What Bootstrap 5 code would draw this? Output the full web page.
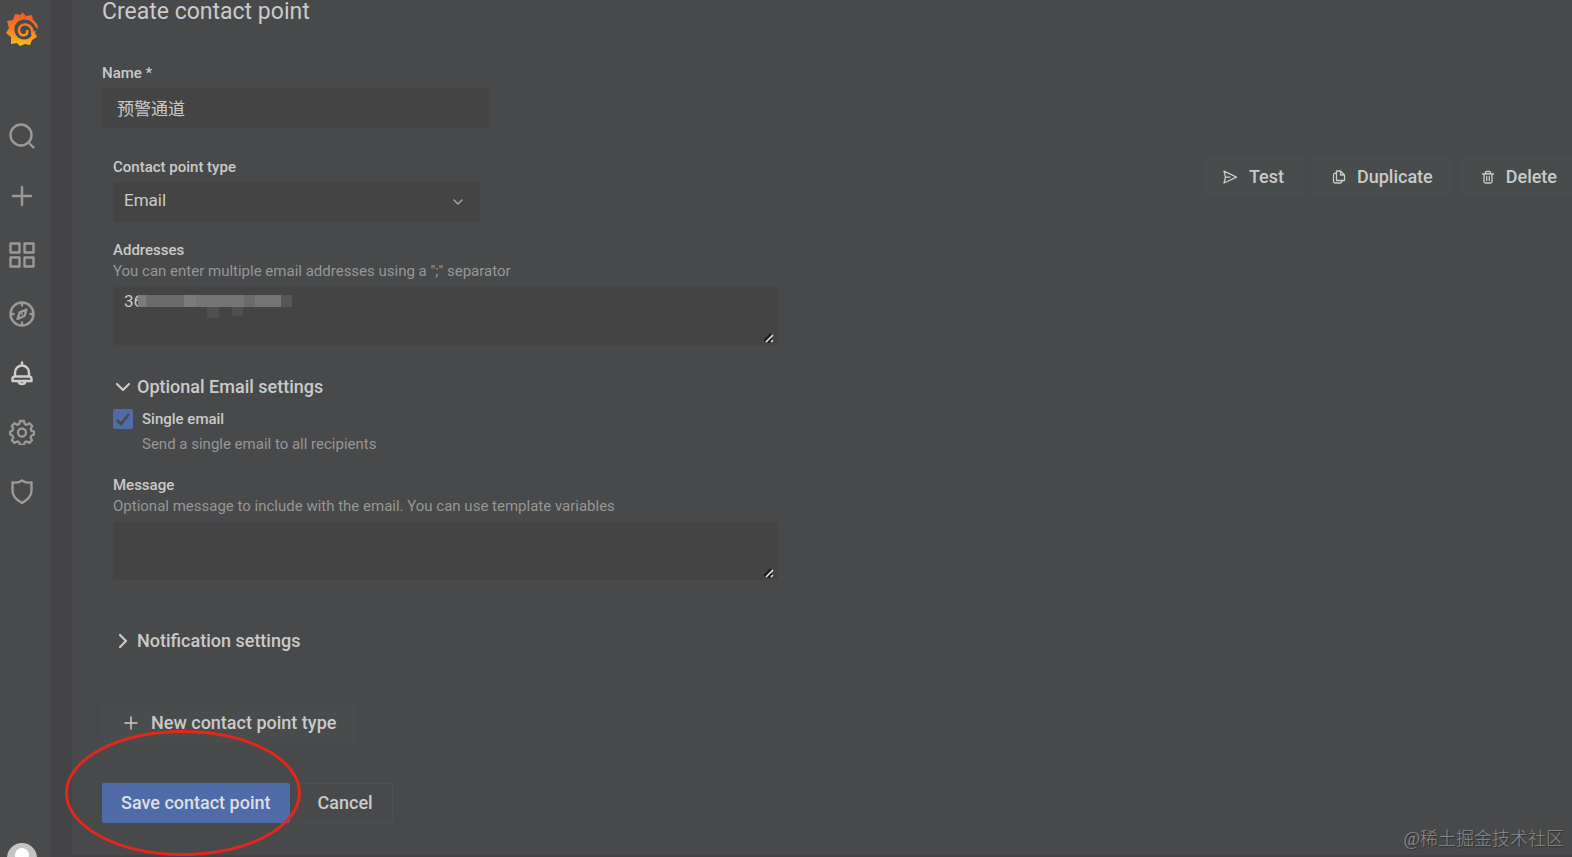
<!DOCTYPE html>
<html lang="en">
<head>
<meta charset="utf-8">
<meta name="viewport" content="width=device-width, initial-scale=1">
<title>Create contact point</title>
<link href="https://cdn.jsdelivr.net/npm/bootstrap@5.3.0/dist/css/bootstrap.min.css" rel="stylesheet">
<script src="https://cdn.jsdelivr.net/npm/bootstrap@5.3.0/dist/js/bootstrap.bundle.min.js"></script>
<style>
:root{--panel:#48494b;--gutter:#444446;--field:#444445;--text:#cbcac8;--muted:#979795;--blue:#4f6ba8}
body{font-family:Roboto,"Noto Sans CJK SC",sans-serif;background:var(--gutter);color:var(--text);font-size:17px;line-height:20px}
.side{width:51px;background:#494a4b}
.side a{width:44px;height:59px;color:#9a9a99}
.side a.brand{height:57px;margin-bottom:50px}
.side a.current{color:#cfcecb}
.side a.avatar{height:30px;margin-bottom:-16px}
.page-body{background:var(--panel);margin-left:21px;padding-left:30px;border-bottom:2px solid #434345}
h1{font-size:23px;line-height:24px;font-weight:400;margin-bottom:39px}
.lbl{font-size:15px;font-weight:500;line-height:20px;display:block}
.hint{font-size:15px;line-height:22px;color:var(--muted)}
.field,.field:focus{background-color:var(--field);color:var(--text);border:0;border-radius:2px;box-shadow:none;font-size:17px;line-height:20px}
.name-field{max-width:387px;height:40px;padding:9px 15px 11px;margin:5px 0 29px}
.inner{margin-left:11px}
.type-field{width:367px;height:40px;padding:8px 11px 12px;margin:5px 0 18px;
--bs-form-select-bg-img:url("data:image/svg+xml,%3Csvg xmlns='http://www.w3.org/2000/svg' viewBox='0 0 12 12'%3E%3Cpath d='M2 4l4 4 4-4' fill='none' stroke='%23aaa' stroke-width='1.4' stroke-linecap='round' stroke-linejoin='round'/%3E%3C/svg%3E");background-size:12px;background-position:right 16px top 14px}
.area-wrap{width:665px;max-width:100%;margin-top:5px}
.area-wrap textarea{height:58px;min-height:0;padding:4px 11px;resize:none;display:block}
.grip{right:4px;bottom:2px}
.mosaic{left:25px;top:7px}
.toggle{border:0;background:none;color:var(--text);font-size:18px;font-weight:500;padding:0;height:24px;gap:5px;margin-top:30px}
.toggle.closed{margin-top:49px}
.tick{width:20px;height:20px;margin:0;border:0;flex:none}
.tick[type=checkbox]{border-radius:2px}
.tick:checked{background-color:var(--blue);--bs-form-check-bg-image:url("data:image/svg+xml,%3Csvg xmlns='http://www.w3.org/2000/svg' viewBox='0 0 20 20'%3E%3Cpath d='M4 11l4 4 8-10' fill='none' stroke='%2348494b' stroke-width='2.6'/%3E%3C/svg%3E");background-image:url("data:image/svg+xml,%3Csvg xmlns='http://www.w3.org/2000/svg' viewBox='0 0 20 20'%3E%3Cpath d='M4 11l4 4 8-10' fill='none' stroke='%2348494b' stroke-width='2.6'/%3E%3C/svg%3E")}
.tick-row{margin-top:10px;gap:9px}
.act{height:40px;border-radius:2px;font-size:18px;font-weight:500;line-height:20px;padding:0 19px;gap:10px;color:var(--text);border:0;white-space:nowrap}
.act.grey,.act.grey:hover{background:#484c4c;color:var(--text)}
.act.save,.act.save:hover{background:var(--blue);color:#dcdfe6}
.act.outline,.act.outline:hover{border:1px solid #4e4f50;color:var(--text)}
.act.add{margin-top:50px}
.tools{gap:9px;margin-right:-4px}
.ring{left:-38px;top:-38px;pointer-events:none}
.credit{right:8px;bottom:8px;font-family:"Liberation Serif","Noto Sans CJK SC",serif;font-weight:300;font-size:18px;color:#8b8b8c;text-shadow:1px 1px 1px #2e2e2f}
</style>
</head>
<body>
<div class="d-flex vh-100 overflow-hidden position-relative">
<nav class="side d-flex flex-column flex-shrink-0" aria-label="Main">
<a href="#" class="brand d-flex align-items-center justify-content-center" aria-label="Home">
<svg width="34" height="36" viewBox="0 0 34 36"><defs><linearGradient id="sun" gradientUnits="userSpaceOnUse" x1="0" y1="0" x2="0" y2="36"><stop offset="0" stop-color="#ee5a2c"/><stop offset=".5" stop-color="#f47a27"/><stop offset="1" stop-color="#fbc417"/></linearGradient></defs>
<path fill="url(#sun)" d="M17 1l4 4 6-1 1 5c3 2 5 5 5 9l-3-3c1 3 1 5 0 7l2 4-5 3-2 5-5-1-5 2-3-3-6 1 0-7-5-4 3-5-2-7 6-1 2-6 6 1z"/>
<path fill="#48494b" d="M32 19C29 11 24 8 18.500 8.500 12.500 9 9 14 9.500 19.500c.5 5 4.500 9 9.500 9 3.500 0 6.500-1.500 8-4.500l2.500-4z"/>
<path d="M27.500 23.500c.5-6.500-3-10-7.500-10-4 0-6.300 3-6 6.200.3 3 2.500 4.800 5 4.600 2.500-.3 3.700-2.300 3.200-4.200" fill="none" stroke="url(#sun)" stroke-width="2.600" stroke-linecap="round"/></svg></a>
<a href="#" class="d-flex align-items-center justify-content-center" aria-label="Search"><svg width="26" height="28" viewBox="0 0 26 28" fill="none" stroke="currentColor" stroke-width="2.400" stroke-linecap="round"><circle cx="12" cy="12" r="10.500"/><path d="M19.500 19.500L24.500 24.500"/></svg></a>
<a href="#" class="d-flex align-items-center justify-content-center" aria-label="Create"><svg width="26" height="26" viewBox="0 0 26 26" fill="none" stroke="currentColor" stroke-width="2.400" stroke-linecap="round"><path d="M13 4v18M4 13h18"/></svg></a>
<a href="#" class="d-flex align-items-center justify-content-center" aria-label="Dashboards"><svg width="26" height="26" viewBox="0 0 26 26" fill="none" stroke="currentColor" stroke-width="2.400" stroke-linejoin="round"><path d="M1.500 1.500h9v9h-9zM15.500 1.500h9v9h-9zM1.500 15.500h9v9h-9zM15.500 15.500h9v9h-9z"/></svg></a>
<a href="#" class="d-flex align-items-center justify-content-center" aria-label="Explore"><svg width="26" height="26" viewBox="0 0 26 26" fill="none" stroke="currentColor" stroke-width="2.400" stroke-linejoin="round" stroke-linecap="round"><circle cx="13" cy="13" r="11.500"/><path d="M17.500 8.500l-2 6.500-7 3 2.200-6.700zM13 2v2.500M13 21.500V24M2 13h2.500M21.500 13H24"/><path d="M13 12.500v1" stroke-width="1.500"/></svg></a>
<a href="#" class="current d-flex align-items-center justify-content-center" aria-label="Alerting"><svg width="26" height="26" viewBox="0 0 26 26" fill="none" stroke="currentColor" stroke-width="2.400" stroke-linejoin="round" stroke-linecap="round"><path d="M13 2.500v3M6 16.500V12.500a7 7 0 0 1 14 0v4M6 16.500h14c1.500 0 2.500 1 2.500 2.500v2h-19v-2c0-1.500 1-2.500 2.500-2.500zM9.500 21.500c.8 3.500 6.200 3.500 7 0"/></svg></a>
<a href="#" class="d-flex align-items-center justify-content-center" aria-label="Configuration"><svg width="26" height="26" viewBox="0 0 26 26" fill="none" stroke="currentColor" stroke-width="2.300" stroke-linejoin="round"><circle cx="13" cy="13.500" r="4"/><path d="M11 2h4l.7 3 2 .9 2.800-1.700 2.800 2.800-1.700 2.800.9 2 2.500.7v3l-2.500 1-.9 2 1.500 2.700-2.700 2.700-2.700-1.500-2 .9-.7 2.500h-4l-.8-2.500-2-.9-2.700 1.500-2.700-2.700L4.300 18.500l-.9-2-2.200-1v-3l2.200-.9.9-2-1.500-2.600 2.700-2.800 2.700 1.700 2-.9z"/></svg></a>
<a href="#" class="d-flex align-items-center justify-content-center" aria-label="Server admin"><svg width="26" height="26" viewBox="0 0 26 26" fill="none" stroke="currentColor" stroke-width="2.400" stroke-linejoin="round"><path d="M13 2.500c2.800 2 6 2.600 9.500 1.800V12.500c0 5.500-4 9.500-9.500 12.500C7.500 22 3.500 18 3.500 12.500V4.300C7 5.100 10.200 4.500 13 2.500z"/></svg></a>
<a href="#" class="avatar mt-auto d-flex justify-content-center" aria-label="Profile"><svg width="30" height="30" viewBox="0 0 30 30"><circle cx="15" cy="15" r="15" fill="#c4c4c4"/><circle cx="15" cy="12" r="7" fill="#fff"/></svg></a>
</nav>
<main class="page-body flex-grow-1">
<h1>Create contact point</h1>
<form onsubmit="return false">
<label class="lbl" for="cp-name">Name *</label>
<input id="cp-name" class="form-control field name-field" type="text" value="预警通道">
<div class="d-flex justify-content-between align-items-start">
<div class="inner flex-grow-1">
<label class="lbl" for="cp-type">Contact point type</label>
<select id="cp-type" class="form-select field type-field"><option>Email</option></select>
<label class="lbl" for="cp-addr">Addresses</label>
<div class="hint">You can enter multiple email addresses using a ";" separator</div>
<div class="area-wrap position-relative">
<textarea id="cp-addr" class="form-control field">36</textarea>
<svg class="mosaic position-absolute" width="156" height="26" viewBox="0 0 156 26"><path fill="#6b6b6b" d="M0 1h154v12H0z"/><path fill="#7b7b7b" d="M0 1h8v12H0zM46 1h12v12H46z"/><path fill="#757575" d="M58 1h48v12H58zM117 1h26v12h-26z"/><path fill="#565657" d="M143 1h11v12h-11z"/><path fill="#4f4f50" d="M69 13h12v11H69zM94 13h11v9H94z"/></svg>
<svg class="grip position-absolute" width="10" height="10" viewBox="0 0 10 10"><path d="M0 8l7-7M4 10l4-4" stroke="#1d1d1d" stroke-width="2"/><path d="M2 9l7-7M7 9l2-2" stroke="#e4e4e4" stroke-width="1.500"/></svg>
</div>
<button type="button" class="toggle d-flex align-items-center"><svg width="19" height="19" viewBox="0 0 19 19" fill="none" stroke="currentColor" stroke-width="2.200" stroke-linecap="round" stroke-linejoin="round"><path d="M4 6l6 6 6-6"/></svg>Optional Email settings</button>
<div class="tick-row d-flex">
<input id="cp-single" class="form-check-input tick" type="checkbox" checked>
<div><label class="lbl" for="cp-single">Single email</label><div class="hint mt-1">Send a single email to all recipients</div></div>
</div>
<label class="lbl mt-3 pt-1" for="cp-msg">Message</label>
<div class="hint">Optional message to include with the email. You can use template variables</div>
<div class="area-wrap position-relative">
<textarea id="cp-msg" class="form-control field"></textarea>
<svg class="grip position-absolute" width="10" height="10" viewBox="0 0 10 10"><path d="M0 8l7-7M4 10l4-4" stroke="#1d1d1d" stroke-width="2"/><path d="M2 9l7-7M7 9l2-2" stroke="#e4e4e4" stroke-width="1.500"/></svg>
</div>
<button type="button" class="toggle closed d-flex align-items-center"><svg width="19" height="19" viewBox="0 0 19 19" fill="none" stroke="currentColor" stroke-width="2.200" stroke-linecap="round" stroke-linejoin="round"><path d="M7 3l6 6-6 6"/></svg>Notification settings</button>
</div>
<div class="tools d-flex flex-shrink-0">
<button type="button" class="btn act grey d-flex align-items-center"><svg width="17" height="16" viewBox="0 0 17 16" fill="none" stroke="currentColor" stroke-width="1.300" stroke-linejoin="round"><path d="M2 2.200l12.500 5.900L2 14l1.500-5.900zM3.500 8.100h5"/></svg>Test</button>
<button type="button" class="btn act grey d-flex align-items-center"><svg width="16" height="16" viewBox="0 0 16 16" fill="none" stroke="currentColor" stroke-width="1.300" stroke-linejoin="round"><path d="M5.500 2h4l4 4v5.500h-8zM9.500 2v4h4M5.500 4C3.500 4 2.500 4.500 2.500 6v6c0 1.500.5 2 2 2H9c1.500 0 2-.8 2-2.500"/></svg>Duplicate</button>
<button type="button" class="btn act grey d-flex align-items-center"><svg width="16" height="16" viewBox="0 0 16 16" fill="none" stroke="currentColor" stroke-width="1.300" stroke-linecap="round" stroke-linejoin="round"><path d="M2.500 5h11M4 5v7.500C4 13.500 4.500 14 5.500 14h5c1 0 1.500-.5 1.500-1.500V5M5.500 5V3.500C5.500 3 6 2.500 6.500 2.500h3c.5 0 1 .5 1 1V5M6.700 7.500v4M9.300 7.500v4"/></svg>Delete</button>
</div>
</div>
<button type="button" class="btn act grey add d-flex align-items-center"><svg width="20" height="20" viewBox="0 0 20 20" fill="none" stroke="currentColor" stroke-width="1.500" stroke-linecap="round"><path d="M10 4v12M4 10h12"/></svg>New contact point type</button>
<div class="d-flex mt-4 pt-3 gap-2 position-relative">
<button type="submit" class="btn act save">Save contact point</button>
<button type="button" class="btn act outline">Cancel</button>
<svg class="ring position-absolute" width="238" height="128" viewBox="0 0 238 128"><ellipse cx="119" cy="64" rx="116.500" ry="61.500" fill="none" stroke="#e4261b" stroke-width="3"/></svg>
</div>
</form>
</main>
<div class="credit position-absolute">@稀土掘金技术社区</div>
</div>
</body>
</html>
